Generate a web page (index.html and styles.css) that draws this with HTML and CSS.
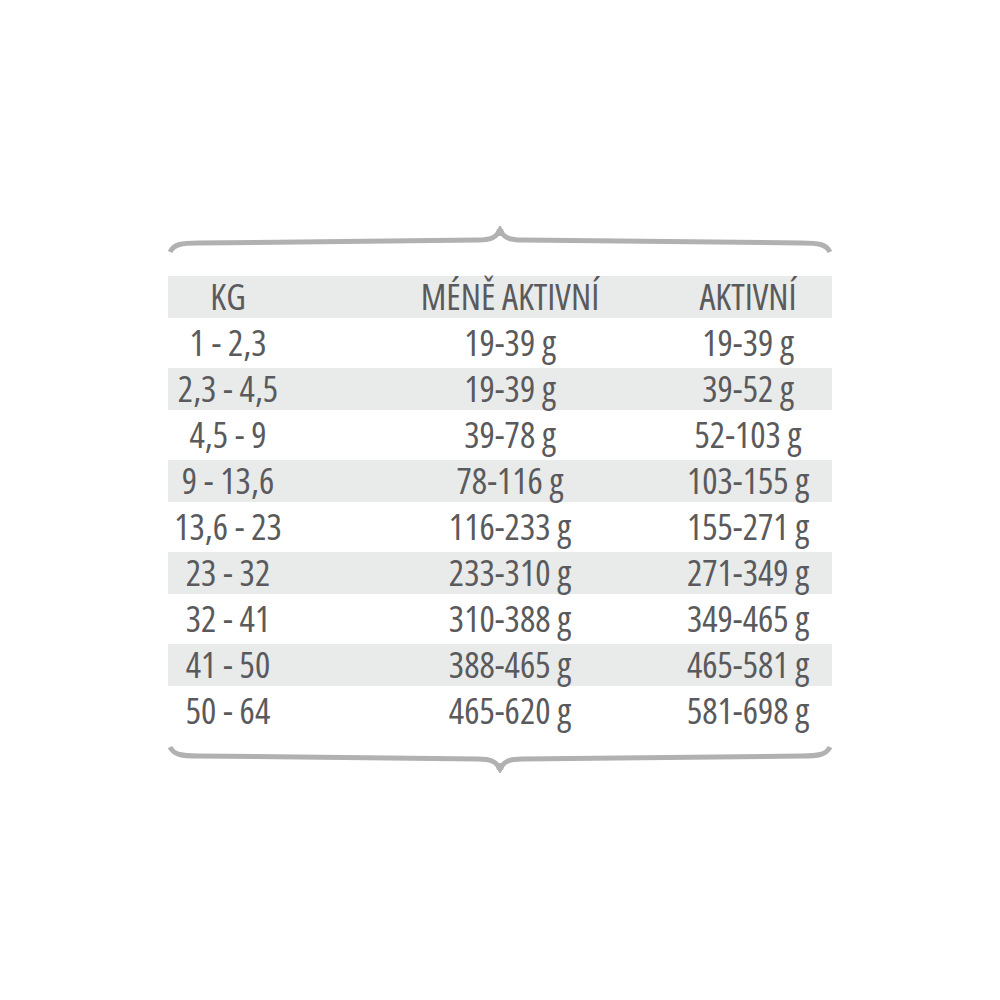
FILE: index.html
```html
<!DOCTYPE html>
<html lang="cs">
<head>
<meta charset="utf-8">
<title>Dávkování</title>
<link rel="stylesheet" href="styles.css">
</head>
<body>
<div class="page">
  <div class="chart">
    <svg class="brace" width="664" height="30" viewBox="0 0 664 30">
      <path d="M2,26 C6,18 14,17 30,17 L310,14 C322,14 328,12 332,4 C336,12 342,14 354,14 L634,17 C650,17 658,18 662,26" fill="none" stroke="#b1b1b1" stroke-width="5"/>
      <path d="M327,10 L329,3 L335,3 L337,10 Z" fill="#b1b1b1"/>
    </svg>
    <div class="table">
      <div class="row band"><span class="cell">KG</span><span class="cell">MÉNĚ AKTIVNÍ</span><span class="cell">AKTIVNÍ</span></div>
      <div class="row"><span class="cell">1 - 2,3</span><span class="cell">19-39 g</span><span class="cell">19-39 g</span></div>
      <div class="row band"><span class="cell">2,3 - 4,5</span><span class="cell">19-39 g</span><span class="cell">39-52 g</span></div>
      <div class="row"><span class="cell">4,5 - 9</span><span class="cell">39-78 g</span><span class="cell">52-103 g</span></div>
      <div class="row band"><span class="cell">9 - 13,6</span><span class="cell">78-116 g</span><span class="cell">103-155 g</span></div>
      <div class="row"><span class="cell">13,6 - 23</span><span class="cell">116-233 g</span><span class="cell">155-271 g</span></div>
      <div class="row band"><span class="cell">23 - 32</span><span class="cell">233-310 g</span><span class="cell">271-349 g</span></div>
      <div class="row"><span class="cell">32 - 41</span><span class="cell">310-388 g</span><span class="cell">349-465 g</span></div>
      <div class="row band"><span class="cell">41 - 50</span><span class="cell">388-465 g</span><span class="cell">465-581 g</span></div>
      <div class="row"><span class="cell">50 - 64</span><span class="cell">465-620 g</span><span class="cell">581-698 g</span></div>
    </div>
    <svg class="brace brace-bottom" width="664" height="30" viewBox="0 0 664 30">
      <path d="M2,4 C6,12 14,13 30,13 L310,16 C322,16 328,18 332,26 C336,18 342,16 354,16 L634,13 C650,13 658,12 662,4" fill="none" stroke="#b1b1b1" stroke-width="5"/>
      <path d="M327,20 L329,27 L335,27 L337,20 Z" fill="#b1b1b1"/>
    </svg>
  </div>
</div>
</body>
</html>
```
FILE: styles.css
```css
html, body {
  margin: 0;
  padding: 0;
  background: #ffffff;
}

.page {
  padding-top: 226px;
}

.chart {
  width: 664px;
  margin-left: 168px;
  display: flex;
  flex-direction: column;
}

.brace {
  display: block;
}

.table {
  margin-top: 18px;
  margin-bottom: 9px;
}

.row {
  box-sizing: border-box;
  height: 46px;
  display: grid;
  grid-template-columns: 120px 444px 32px;
  padding-right: 68px;
  align-items: center;
  border-top: 2px solid transparent;
  border-bottom: 2px solid transparent;
  background-clip: padding-box;
  font-family: "Open Sans", sans-serif;
  font-stretch: 75%;
  font-size: 36px;
  color: #5a5a5c;
  line-height: 1;
}

.band {
  background-color: #e9eaea;
}

.cell {
  display: flex;
  justify-content: center;
  white-space: nowrap;
}
```
